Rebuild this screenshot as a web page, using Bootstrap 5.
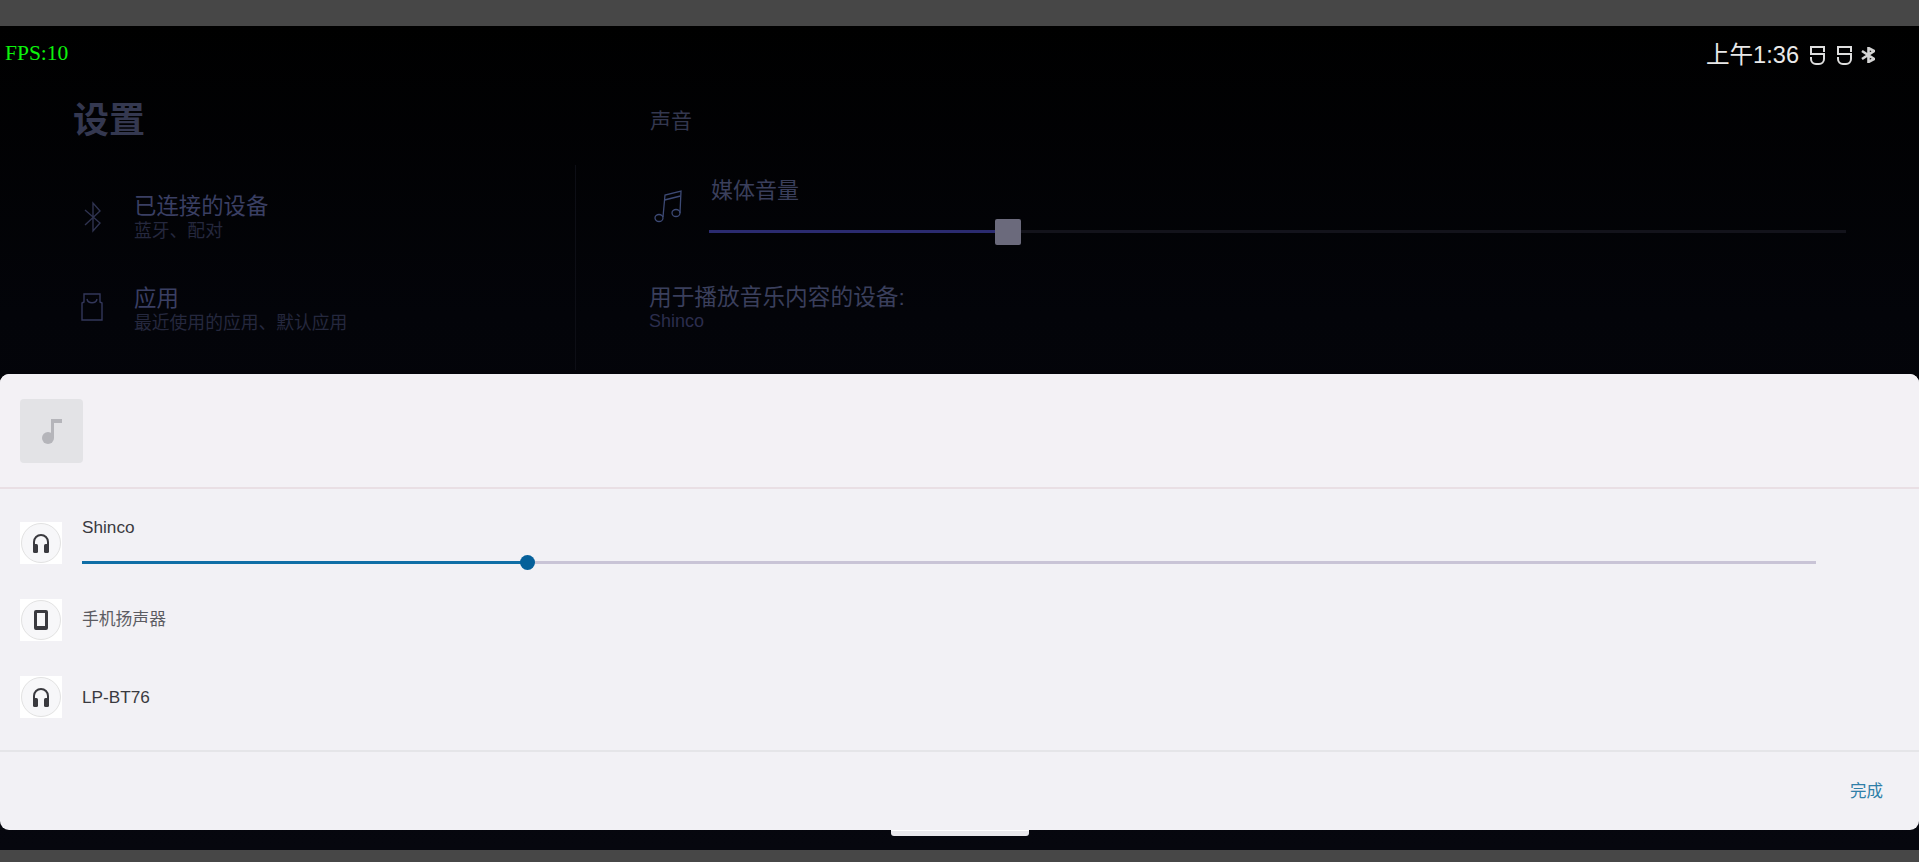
<!DOCTYPE html>
<html lang="zh-CN">
<head>
    <meta charset="UTF-8">
    <meta name="viewport" content="width=device-width, initial-scale=1.0">
    <title>声音设置</title>
    <link href="https://cdn.jsdelivr.net/npm/bootstrap@5.3.0/dist/css/bootstrap.min.css" rel="stylesheet">
    <script src="https://cdn.jsdelivr.net/npm/bootstrap@5.3.0/dist/js/bootstrap.bundle.min.js"></script>
    <style>
        html, body { height: 100%; }
        body { background: #474747; font-family: "Liberation Sans", "Noto Sans CJK SC", sans-serif; overflow: hidden; }
        .frame-top { height: 26px; background: #474747; }
        .frame-bottom { height: 12px; background: #474747; }
        .screen { height: 824px; background: linear-gradient(180deg, #000 0%, #030409 35%, #06070e 100%); overflow: hidden; }
        .fps { left: 5px; top: 14px; font: 21.500px/26px "Liberation Serif", serif; color: #0cf40c; }
        .status-bar { right: 44px; top: 16px; height: 26px; color: #e9e9e9; font-size: 23.600px; line-height: 26px; gap: 10px; }
        .status-bt { margin-left: -2px; }
        .settings-col { width: 575px; height: 344px; padding: 75px 0 0 73px; }
        .col-rule { width: 1px; height: 205px; margin-top: 139px; background: #0d0e15; }
        .settings-title { font-size: 36px; line-height: 40px; font-weight: 700; color: #343850; margin: 0 0 53px; }
        .menu-item { height: 92px; gap: 30px; }
        .menu-ico { width: 31px; flex: none; padding: 7px 0 0 8px; }
        .bt-ico { margin-left: 2px; }
        .menu-name { font-size: 22.400px; line-height: 26px; color: #3a3f63; }
        .menu-sub { font-size: 17.800px; line-height: 20px; color: #25283e; margin-top: 1px; }
        .sound-col { padding: 82px 73px 0 74px; }
        .sound-head { font-size: 21px; line-height: 26px; color: #33374f; margin-bottom: 44px; }
        .media-row { gap: 27px; }
        .media-ico { margin: 11px 0 0 4px; }
        .media-name { font-size: 22px; line-height: 26px; color: #3a3f5c; margin-bottom: 26px; padding-left: 2px; }
        .media-track { height: 3px; background: #13131b; }
        .media-fill { height: 3px; background: #2b2b70; }
        .media-thumb { width: 26px; height: 26px; top: -11px; margin-left: -13px; background: #6b6a7c; border-radius: 2px; }
        .device-title { font-size: 22.700px; line-height: 26px; color: #3a3f5c; margin-top: 51px; margin-left: -1px; }
        .device-name { font-size: 18px; line-height: 22px; color: #2b2d4d; margin-left: -1px; }
        .output-panel { left: 0; right: 0; top: 348px; height: 456px; background: #f2f1f5; border-radius: 9px; }
        .panel-head { height: 115px; padding: 25px 20px 0; border-bottom: 2px solid #e9dfe4; background: #f3f1f5; border-radius: 9px 9px 0 0; }
        .album-art { width: 63px; height: 64px; background: #e3e3e6; border-radius: 4px; }
        .panel-body { height: 263px; padding: 33px 103px 0 20px; border-bottom: 2px solid #e5e5e8; gap: 35px; }
        .route-row { height: 42px; gap: 20px; }
        .route-ico { width: 42px; height: 42px; background: #fff; flex: none; }
        .route-ring { width: 40px; height: 40px; border: 1px solid #e2e2e2; border-radius: 50%; background: #f7f7f9; }
        .route-label { font-size: 17.200px; line-height: 20px; color: #3a3a40; }
        .route-label-cjk { color: #5c5c62; font-size: 16.800px; }
        .route-shift { margin-top: -5px; }
        .route-track { height: 3px; background: #c9c4d6; margin-top: 24px; }
        .route-fill { height: 3px; background: #0f6ea6; }
        .route-thumb { width: 15px; height: 15px; top: -6px; margin-left: -7px; background: #05609a; border-radius: 50%; }
        .panel-foot { height: 78px; padding: 0 36px 0 0; }
        .done-link { font-size: 16.500px; color: #2f7fa8; text-decoration: none; margin-top: 1px; }
        .nav-handle { left: 891px; top: 804px; width: 138px; height: 6px; background: #e9e8ec; border-top: 1px solid #fff; border-radius: 0 0 3px 3px; }
    </style>
</head>
<body>
    <div class="frame-top"></div>

    <div class="screen position-relative">
        <div class="fps position-absolute">FPS:10</div>

        <div class="status-bar position-absolute d-flex align-items-center">
            <span>上午1:36</span>
            <svg width="17" height="21" viewBox="0 0 17 21" fill="none" stroke="#dedede" stroke-width="2"><path d="M15 7V2H2v7h13v5a5 5 0 0 1-5 5H7a5 5 0 0 1-5-5v-2"/></svg>
            <svg width="17" height="21" viewBox="0 0 17 21" fill="none" stroke="#dedede" stroke-width="2"><path d="M15 7V2H2v7h13v5a5 5 0 0 1-5 5H7a5 5 0 0 1-5-5v-2"/></svg>
            <svg class="status-bt" width="14" height="16" viewBox="0 0 14 16" fill="none" stroke="#d4d4d4" stroke-width="2.600"><path d="M1 4l12 8-5.500 3V1L13 4 1 12"/></svg>
        </div>

        <div class="d-flex">
            <div class="settings-col flex-shrink-0">
                <h1 class="settings-title">设置</h1>
                <div class="menu-item d-flex">
                    <div class="menu-ico d-flex">
                        <svg class="bt-ico" width="19" height="32" viewBox="0 0 19 32" fill="none" stroke="#2f3350" stroke-width="1.400"><path d="M2 9l15 13-7 8V2l7 8L2 24"/></svg>
                    </div>
                    <div>
                        <div class="menu-name">已连接的设备</div>
                        <div class="menu-sub">蓝牙、配对</div>
                    </div>
                </div>
                <div class="menu-item d-flex">
                    <div class="menu-ico d-flex">
                        <svg width="22" height="28" viewBox="0 0 22 28" fill="none" stroke="#33375a" stroke-width="1.400"><path d="M3 1h16v8l2 1v17H1V10l2-1z"/><path d="M6 6c1 5 9 5 10 0"/></svg>
                    </div>
                    <div>
                        <div class="menu-name">应用</div>
                        <div class="menu-sub">最近使用的应用、默认应用</div>
                    </div>
                </div>
            </div>
            <div class="col-rule flex-shrink-0"></div>

            <div class="sound-col flex-grow-1">
                <div class="sound-head">声音</div>
                <div class="media-row d-flex">
                    <svg class="media-ico flex-shrink-0" width="28" height="34" viewBox="0 0 28 34" fill="none" stroke="#3d4a75" stroke-width="1.300"><ellipse cx="5" cy="29" rx="4" ry="3.500"/><ellipse cx="22" cy="24" rx="4" ry="3.500"/><path d="M9 28L11 6 27 2 26 24"/><path d="M10.500 11L26.500 7"/></svg>
                    <div class="flex-grow-1">
                        <div class="media-name">媒体音量</div>
                        <div class="media-track position-relative">
                            <div class="media-fill" style="width: 26.3%"></div>
                            <div class="media-thumb position-absolute" style="left: 26.3%"></div>
                        </div>
                    </div>
                </div>
                <div class="device-title">用于播放音乐内容的设备:</div>
                <div class="device-name">Shinco</div>
            </div>
        </div>

        <div class="output-panel position-absolute">
            <div class="panel-head">
                <div class="album-art d-flex align-items-center justify-content-center">
                    <svg width="22" height="28" viewBox="0 0 22 28"><circle cx="7" cy="21" r="6" fill="#b5b5ba"/><path d="M10 21V2h11v4h-8v15z" fill="#b5b5ba"/></svg>
                </div>
            </div>

            <div class="panel-body d-flex flex-column">
                <div class="route-row d-flex">
                    <div class="route-ico d-flex align-items-center justify-content-center">
                        <div class="route-ring d-flex align-items-center justify-content-center">
                            <svg width="18" height="21" viewBox="0 0 18 21"><path d="M1 13V9a8 8 0 0 1 16 0v4h-2V9a6 6 0 0 0-12 0v4z" fill="#3a3a3f"/><rect x="1" y="11" width="5" height="9" rx="1.500" fill="#3a3a3f"/><rect x="12" y="11" width="5" height="9" rx="1.500" fill="#3a3a3f"/></svg>
                        </div>
                    </div>
                    <div class="flex-grow-1 route-shift">
                        <div class="route-label">Shinco</div>
                        <div class="route-track position-relative">
                            <div class="route-fill" style="width: 25.66%"></div>
                            <div class="route-thumb position-absolute" style="left: 25.66%"></div>
                        </div>
                    </div>
                </div>
                <div class="route-row d-flex align-items-center">
                    <div class="route-ico d-flex align-items-center justify-content-center">
                        <div class="route-ring d-flex align-items-center justify-content-center">
                            <svg width="14" height="20" viewBox="0 0 14 20"><path d="M2 0h10a2 2 0 0 1 2 2v16a2 2 0 0 1-2 2H2a2 2 0 0 1-2-2V2a2 2 0 0 1 2-2zm1 3v13h8V3z" fill="#3a3a3f"/></svg>
                        </div>
                    </div>
                    <div class="route-label route-label-cjk">手机扬声器</div>
                </div>
                <div class="route-row d-flex align-items-center">
                    <div class="route-ico d-flex align-items-center justify-content-center">
                        <div class="route-ring d-flex align-items-center justify-content-center">
                            <svg width="18" height="21" viewBox="0 0 18 21"><path d="M1 13V9a8 8 0 0 1 16 0v4h-2V9a6 6 0 0 0-12 0v4z" fill="#3a3a3f"/><rect x="1" y="11" width="5" height="9" rx="1.500" fill="#3a3a3f"/><rect x="12" y="11" width="5" height="9" rx="1.500" fill="#3a3a3f"/></svg>
                        </div>
                    </div>
                    <div class="route-label">LP-BT76</div>
                </div>
            </div>

            <div class="panel-foot d-flex align-items-center justify-content-end">
                <a href="#" class="done-link">完成</a>
            </div>
        </div>

        <div class="nav-handle position-absolute"></div>
    </div>

    <div class="frame-bottom"></div>
</body>
</html>
